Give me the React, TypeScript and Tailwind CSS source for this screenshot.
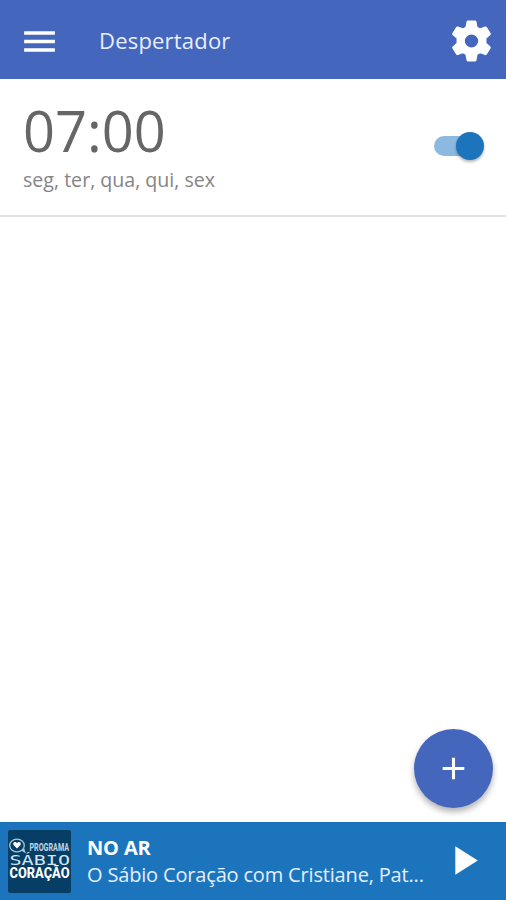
import { MdAdd, MdMenu, MdPlayArrow } from 'react-icons/md';

const alarms = [
  { time: '07:00', days: 'seg, ter, qua, qui, sex' }
];

function GearIcon() {
  return (
    <svg viewBox="0 0 40 42" className="h-[42px] w-[41px] shrink-0" fill="#fff" stroke="#fff" strokeWidth="3" strokeLinejoin="round" preserveAspectRatio="none">
      <path
        fillRule="evenodd"
        d="M16.6 2h6.8l1.1 5.8 3.7 2.2 5.6-2 3.6 6-4.3 3.9v5.8l4.3 3.9-3.6 6-5.6-2-3.7 2.2-1.1 6.2h-6.8l-1.1-6.2-3.7-2.2-5.6 2-3.6-6 4.3-3.9v-5.8l-4.3-3.9 3.6-6 5.6 2 3.7-2.2zM20 13a8 8 0 1 0 0 16a8 8 0 1 0 0-16z"
      />
    </svg>
  );
}

function Header() {
  return (
    <header className="flex h-[79px] shrink-0 items-center bg-[#4466bd] pt-[3px] pl-[19px] pr-[14px] text-white">
      <MdMenu className="h-[41px] w-[41px] shrink-0" />
      <h1 className="mb-[2px] ml-[39px] flex-1 text-[22px] leading-[30px] tracking-[0.2px] text-[#e8eeff]">
        Despertador
      </h1>
      <GearIcon />
    </header>
  );
}

function Toggle() {
  return (
    <div className="relative mb-[3px] h-5 w-[50px]">
      <div className="h-5 w-[44px] rounded-full bg-[#8cb9df]" />
      <div className="absolute -top-[4px] right-0 h-7 w-7 rounded-full bg-[#1c75bc] shadow-[0_2px_3px_rgba(0,0,0,0.3)]" />
    </div>
  );
}

function Cover() {
  return (
    <svg viewBox="0 0 63 63" className="h-[63px] w-[63px] shrink-0 rounded-[2px] bg-[#073e66]">
      <ellipse cx="9" cy="15.5" rx="7.3" ry="6.3" fill="none" stroke="#a9c6d6" strokeWidth="1.3" />
      <path d="M13 20.5l5 3-2-5.5z" fill="#a9c6d6" />
      <path d="M9 18.5l-3.5-3.6c-1.3-2.4 2-4 3.5-1.6 1.5-2.4 4.8-.8 3.5 1.6z" fill="#fff" />
      <text x="21.5" y="21" fontSize="10.5" fontWeight="800" textLength="39.5" lengthAdjust="spacingAndGlyphs" fill="#bdd1df" fontFamily="Roboto, sans-serif">
        PROGRAMA
      </text>
      <text x="1.5" y="34.5" fontSize="14" textLength="60.5" lengthAdjust="spacingAndGlyphs" fill="#d3e5ef" fontFamily="'DejaVu Sans Mono', monospace">
        SÁBIO
      </text>
      <text x="1.5" y="47.5" fontSize="14.5" fontWeight="800" textLength="60" lengthAdjust="spacingAndGlyphs" fill="#fff" fontFamily="Roboto, sans-serif">
        CORAÇÃO
      </text>
    </svg>
  );
}

function Player() {
  return (
    <footer className="flex h-[78px] shrink-0 items-center bg-[#1c75bc] pl-2 pr-[18px] text-white">
      <Cover />
      <div className="ml-[16px] w-[345px] pb-px">
        <div className="text-[20px] leading-[27px] font-bold tracking-[-0.15px]">NO AR</div>
        <div className="truncate text-[20px] leading-[27px] tracking-[-0.17px] text-[#e3efff]">
          O Sábio Coração com Cristiane, Pat...
        </div>
      </div>
      <MdPlayArrow className="mb-[2px] ml-auto h-[49px] w-[49px] shrink-0" />
    </footer>
  );
}

export default function App() {
  return (
    <div
      className="flex h-screen w-full flex-col overflow-hidden bg-white"
      style={{ fontFamily: "'Open Sans', 'Noto Sans', sans-serif" }}
    >
      <Header />
      <main className="relative flex-1">
        {alarms.map((alarm) => (
          <div
            key={alarm.time}
            className="flex h-[138px] items-center justify-between border-b-2 border-[#e3e3e3] pl-[23px] pr-[22px]"
          >
            <div className="pb-[4px]">
              <div className="pb-[3px] text-[56px] leading-[66px] text-[#666666]">{alarm.time}</div>
              <div className="text-[19.6px] leading-[27px] text-[#858585]">{alarm.days}</div>
            </div>
            <Toggle />
          </div>
        ))}
        <button className="absolute right-[13px] bottom-[14px] flex h-[79px] w-[79px] items-center justify-center rounded-full bg-[#4466bd] text-white shadow-[0_4px_6px_rgba(0,0,0,0.3)]">
          <MdAdd className="h-[37px] w-[37px]" />
        </button>
      </main>
      <Player />
    </div>
  );
}
